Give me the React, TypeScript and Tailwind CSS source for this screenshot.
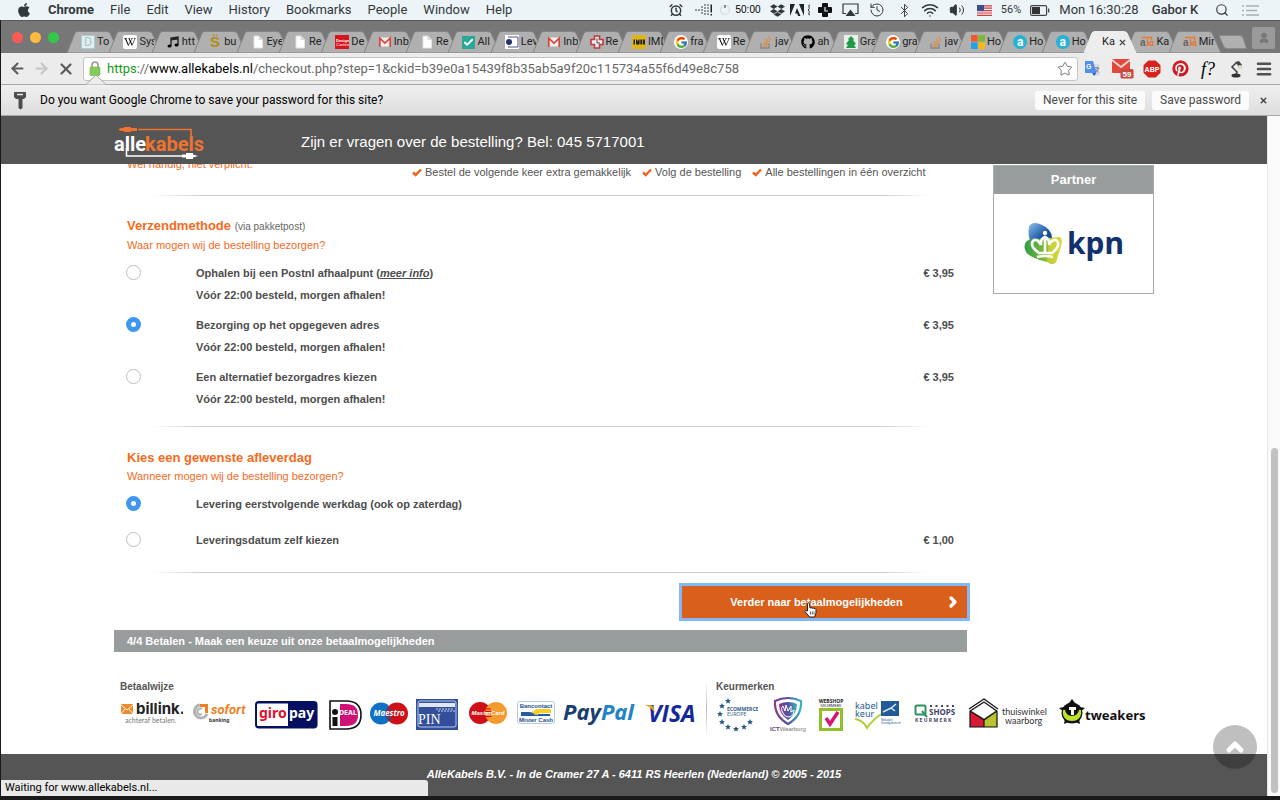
import type { ReactNode } from "react";
import { AlarmClock, Airplay, ArrowLeft, ArrowRight, Bluetooth, Check, ChevronRight, ChevronUp, History, Menu, Search, Star, User, Volume2, Wifi, X } from "lucide-react";
import { FaApple, FaDropbox, FaGithub, FaPinterest, FaStackOverflow, FaWikipediaW } from "react-icons/fa";
import { FcGoogle } from "react-icons/fc";

const menuItems = ["File", "Edit", "View", "History", "Bookmarks", "People", "Window", "Help"];

function Cell({ w, children }: { w: string; children: ReactNode }) {
  return <div className={`flex items-center justify-center whitespace-nowrap ${w}`}>{children}</div>;
}

function MenuBar() {
  return (
    <div className="flex h-5 items-center bg-[#edf4f8] text-[13px] leading-5 text-[#33383b]">
      <div className="flex w-12 justify-center"><FaApple className="size-4" /></div>
      <nav className="flex gap-4 font-['Roboto',sans-serif]">
        <b>Chrome</b>
        {menuItems.map((m) => <span key={m}>{m}</span>)}
      </nav>
      <div className="ml-auto flex h-5 items-center pr-4 font-['Roboto',sans-serif]">
        <Cell w="w-[26px]"><AlarmClock className="size-[14px]" strokeWidth={2.5} /></Cell>
        <Cell w="w-[30px]">
          <svg width="18" height="14" viewBox="0 0 18 14" fill="#222">
            {[[1, 7], [4, 7], [7, 4], [7, 7], [7, 10], [10, 2], [10, 5], [10, 8], [10, 11], [13, 2], [13, 5], [13, 8], [13, 11]].map(([x, y]) => <circle key={`${x}-${y}`} cx={x} cy={y} r="0.8" />)}
            <path d="M15.500 1.500h1.500v8h-1.500zM15.500 11h1.500v1.500h-1.500z" />
          </svg>
        </Cell>
        <Cell w="w-3"><svg width="12" height="12" viewBox="0 0 12 12"><circle cx="6" cy="6" r="4.500" fill="none" stroke="#d4d9dc" strokeWidth="1.200" /><path d="M6 1v3" stroke="#333" /></svg></Cell>
        <Cell w="w-[34px]"><span className="font-['Liberation_Sans',sans-serif] text-[10px] text-black">50:00</span></Cell>
        <Cell w="w-6"><FaDropbox className="size-[15px]" /></Cell>
        <Cell w="w-4">
          <svg width="14" height="12" viewBox="0 0 14 12" fill="#222"><path d="M0 0h5L0 12zM9 0h5v12zM7 4l3.500 8H8L7.200 9.500H5z" /></svg>
        </Cell>
        <Cell w="w-2"><svg width="4" height="12" viewBox="0 0 4 12"><path d="M3 1Q1 1 2 3 3 5 1 6 3 7 2 9 1 11 3 11" fill="none" stroke="#333" /></svg></Cell>
        <Cell w="w-6"><svg width="14" height="14" viewBox="0 0 14 14"><path d="M5 0h4q1 0 1 1v3h3q1 0 1 1v4q0 1-1 1h-3v3q0 1-1 1H5q-1 0-1-1v-3H1q-1 0-1-1V5q0-1 1-1h3V1q0-1 1-1z" fill="#111" /><path d="M7 4v4h3" fill="none" stroke="#edf4f8" strokeWidth="1.200" /></svg></Cell>
        <Cell w="w-[26px]"><svg width="17" height="14" viewBox="0 0 17 14"><path d="M4 10.500H1V1h15v9.500h-3" fill="none" stroke="#33383b" strokeWidth="1.200" /><path d="M8.500 6.500l5 6.500h-10z" fill="#33383b" /></svg></Cell>
        <Cell w="w-7"><History className="size-4" strokeWidth={1.5} /></Cell>
        <Cell w="w-[26px]"><Bluetooth className="size-[15px]" strokeWidth={1.5} /></Cell>
        <Cell w="w-[26px]"><Wifi className="size-[18px]" /></Cell>
        <Cell w="w-[27px]"><Volume2 className="size-4 [&>path:first-child]:fill-current" strokeWidth={1.5} /></Cell>
        <Cell w="w-7">
          <svg width="15" height="11" viewBox="0 0 15 11"><rect width="15" height="11" fill="#f6e9e9" /><path d="M0 .8h15M0 3.200h15M0 5.600h15M0 8h15M0 10.300h15" stroke="#c8434b" strokeWidth="1.200" /><rect width="7" height="6" fill="#3a4d8f" /></svg>
        </Cell>
        <Cell w="w-[26px]"><span className="text-[11px]">56%</span></Cell>
        <Cell w="w-8">
          <svg width="20" height="11" viewBox="0 0 20 11"><rect x=".6" y=".6" width="16" height="9.800" rx="1.500" fill="none" stroke="#444" strokeWidth="1.200" /><rect x="2" y="2" width="8" height="7" fill="#333" /><path d="M18 3.500h1.300v4H18z" fill="#444" /></svg>
        </Cell>
        <Cell w="w-[86px]">Mon 16:30:28</Cell>
        <Cell w="w-[66px]"><span className="font-medium">Gabor K</span></Cell>
        <Cell w="w-7"><Search className="size-[14px]" /></Cell>
        <Cell w="w-7">
          <svg width="17" height="11" viewBox="0 0 17 11"><path d="M0 1h2M4 1h13M0 5.500h2M4 5.500h11M0 10h2M4 10h13" stroke="#a9afb3" strokeWidth="1.400" /></svg>
        </Cell>
      </div>
    </div>
  );
}

const wiki = <span className="flex size-[14px] shrink-0 items-center justify-center rounded-[2px] bg-white text-black"><FaWikipediaW className="size-[12px]" /></span>;
const doc = <svg width="14" height="14" viewBox="0 0 14 14"><path d="M3 1h5l3.500 3.500V13H3z" fill="#fff" stroke="#e2e2e2" /><path d="M8 1v3.500h3.500" fill="#ddd" stroke="#ccc" strokeWidth=".6" /></svg>;
const gmail = <svg width="14" height="14" viewBox="0 0 14 14"><rect x="1" y="2.500" width="12" height="9" fill="#f3efee" /><path d="M1.800 12V3.200L7 8l5.200-4.800V12" fill="none" stroke="#d8453a" strokeWidth="1.700" /></svg>;
const google = <span className="flex size-[14px] shrink-0 items-center justify-center rounded-full bg-white"><FcGoogle className="size-[13px]" /></span>;
const overflow = <svg width="14" height="14" viewBox="0 0 14 14"><path d="M2 8.500V13h8V8.500" fill="none" stroke="#8a8580" strokeWidth="1.300" /><path d="M4 11.200h4.500M4.200 9l4.500.6M5 6.500l4.200 1.700M6.800 4l3.500 2.900M9.500 1.500l2.200 4" fill="none" stroke="#dd8f45" strokeWidth="1.300" /></svg>;
const circleA = <span className="flex size-[14px] shrink-0 items-center justify-center rounded-full bg-[#27b2d6] text-[12px] leading-none font-bold text-white">a</span>;
const kabels = <svg width="14" height="14" viewBox="0 0 14 14"><text x="0" y="11" fontFamily="Liberation Sans" fontWeight="bold" fontSize="10" fill="#666">a</text><path d="M7.500 4v7M12 6l-3.500 2.500L12 11M2 2.500h9.500V5M12.500 11V6" fill="none" stroke="#e97834" strokeWidth="1.500" /></svg>;

const tabs: { label: string; icon: ReactNode; active?: boolean }[] = [
  { label: "To", icon: <span className="flex size-[14px] shrink-0 items-center justify-center border border-[#a9cfd5] bg-[#e4eeef] text-[12px] leading-none text-[#9cc9d0]">D</span> },
  { label: "Sys", icon: wiki },
  { label: "htt", icon: <svg width="14" height="14" viewBox="0 0 14 14"><path d="M5 11V3l7-1v8" fill="none" stroke="#222" strokeWidth="1.400" /><path d="M5 4.500l7-1" stroke="#222" strokeWidth="2" /><ellipse cx="3.500" cy="11" rx="2" ry="1.600" /><ellipse cx="10.500" cy="10" rx="2" ry="1.600" /></svg> },
  { label: "bu", icon: <span className="w-[14px] shrink-0 text-center text-[15px] leading-none font-bold text-[#b58a17]">S̈</span> },
  { label: "Eye", icon: doc },
  { label: "Re", icon: doc },
  { label: "De", icon: <svg width="14" height="14" viewBox="0 0 14 14"><rect width="14" height="14" fill="#d8141c" /><text x="1" y="7" fontSize="4" fontWeight="bold" fontFamily="Liberation Sans" fill="#fff">Design</text><text x="1" y="11" fontSize="4" fontFamily="Liberation Sans" fill="#fff">Contest</text></svg> },
  { label: "Inb", icon: gmail },
  { label: "Re", icon: doc },
  { label: "All", icon: <span className="flex size-[13px] shrink-0 items-center justify-center bg-[#2aa795]"><Check className="size-[11px] text-white" strokeWidth={4} /></span> },
  { label: "Lev", icon: <svg width="14" height="14" viewBox="0 0 14 14"><rect width="14" height="14" fill="#fff" /><path d="M3 2h10v10H3" fill="none" stroke="#4b5389" /><circle cx="4" cy="7" r="3" fill="#28306e" /></svg> },
  { label: "Inb", icon: gmail },
  { label: "Re", icon: <svg width="14" height="14" viewBox="0 0 14 14"><path d="M4.500 1h5v3.500H13v5H9.500V13h-5V9.500H1v-5h3.500z" fill="#eee" stroke="#c03a3f" strokeWidth="1.600" /><path d="M7 3.500V8h3" fill="none" stroke="#444" /></svg> },
  { label: "IMD", icon: <svg width="14" height="14" viewBox="0 0 14 14"><rect width="14" height="14" rx="1" fill="#dfb51c" /><path d="M1.500 4.500h1.500v5h-1.500zM4 9.500v-5h1l.8 2 .8-2h1v5zM8.300 4.500h2v5h-2zM11 4.500h2v5h-2z" fill="#222" /></svg> },
  { label: "fra", icon: google },
  { label: "Re", icon: wiki },
  { label: "jav", icon: overflow },
  { label: "ah", icon: <FaGithub className="size-[14px] text-black" /> },
  { label: "Gra", icon: <svg width="14" height="14" viewBox="0 0 14 14"><rect width="14" height="14" fill="#e8f0e8" /><path d="M7 1l3 3-1 1 3 4-2 1 2 3H2l2-3-2-1 3-4-1-1z" fill="#1f9a45" /></svg> },
  { label: "gra", icon: google },
  { label: "jav", icon: overflow },
  { label: "Ho", icon: <svg width="14" height="14" viewBox="0 0 14 14"><path d="M0 0h6.600v6.600H0z" fill="#f1592a" /><path d="M7.400 0H14v6.600H7.400z" fill="#80b832" /><path d="M0 7.400h6.600V14H0z" fill="#22a2e2" /><path d="M7.400 7.400H14V14H7.400z" fill="#fbb916" /></svg> },
  { label: "Ho", icon: circleA },
  { label: "Ho", icon: circleA },
  { label: "Ka", icon: null, active: true },
  { label: "Ka", icon: kabels },
  { label: "Min", icon: kabels },
];

function TabStrip() {
  return (
    <div className="flex h-[33px] items-end border-t border-[#55595b] bg-[#777]">
      <div className="flex w-[74px] shrink-0 gap-[7px] self-center pl-[11px]">
        <button aria-label="Close window" className="size-[11px] rounded-full bg-[#fc5b57]" />
        <button aria-label="Minimize window" className="size-[11px] rounded-full bg-[#fdbc40]" />
        <button aria-label="Zoom window" className="size-[11px] rounded-full bg-[#34c84a]" />
      </div>
      <div className="flex h-[22px] min-w-0 flex-1">
        {tabs.map((t, i) => (
          <button key={i} className={`relative flex h-[22px] min-w-0 flex-1 items-center pl-[6px] text-left ${t.active ? "z-10" : ""}`}>
            <svg className="absolute top-0 -left-2 h-[22px] w-[53px]" viewBox="0 0 53 22" preserveAspectRatio="none">
              <path d="M0 22L8 2Q9 .5 11 .5H39Q42 .5 43 2L52 22z" fill={t.active ? "#ededed" : "#b0b0b0"} stroke={t.active ? "#ededed" : "#858585"} strokeWidth="1" />
            </svg>
            <span className="relative flex h-[22px] w-full items-center gap-[2px] [&>svg]:shrink-0">
              {t.icon}
              <span className={`overflow-hidden whitespace-nowrap text-[11px] text-[#222] ${t.active ? "ml-1 w-[14px]" : "w-[15px]"}`}>{t.label}</span>
              {t.active && <X className="size-[9px] shrink-0 text-[#444]" strokeWidth={3} />}
            </span>
          </button>
        ))}
      </div>
      <div className="flex w-[61px] shrink-0 items-end justify-between pr-[5px]">
        <button aria-label="New tab" className="mb-1">
          <svg width="28" height="14" viewBox="0 0 28 14"><path d="M1.500.5H21Q23 .5 24 3L27.500 13.500H8Q5.500 13.500 4.500 11L.5 1.500Q.5.5 1.500.5z" fill="#b0b0b0" stroke="#8b8b8b" /></svg>
        </button>
        <button aria-label="Profile" className="mb-1 flex h-[22px] w-[23px] items-center justify-center rounded-[2px] bg-[#9a9a9a]"><User className="size-3 fill-current text-[#777]" strokeWidth={3} /></button>
      </div>
    </div>
  );
}

function Toolbar() {
  return (
    <div className="relative flex h-8 items-center border-b border-[#a8a8a8] bg-[#ececec]">
      <div className="flex w-[82px] shrink-0 items-center justify-between pr-2 pl-2">
        <button aria-label="Back"><ArrowLeft className="size-[17px] text-[#5c5c5c]" strokeWidth={3} /></button>
        <button aria-label="Forward"><ArrowRight className="size-[17px] text-[#c6c6c6]" strokeWidth={3} /></button>
        <button aria-label="Stop"><X className="size-[18px] text-[#5c5c5c]" strokeWidth={3} /></button>
      </div>
      <div className="flex h-6 flex-1 items-center rounded-[3px] border border-[#c4c4c4] bg-white px-1">
        <svg className="mx-px shrink-0" width="12" height="15" viewBox="0 0 12 15"><path d="M3 7V4a3 3 0 0 1 6 0v3" fill="none" stroke="#999" strokeWidth="1.600" /><rect x="1" y="6" width="10" height="8.500" rx="1" fill="#86cc5c" stroke="#69b33e" strokeWidth=".6" /></svg>
        <div className="ml-[5px] flex-1 text-[13px] whitespace-nowrap text-[#686868]"><span className="text-[#159a15]">https</span>://<span className="text-black">www.allekabels.nl</span>/checkout.php?step=1&amp;ckid=b39e0a15439f8b35ab5a9f20c115734a55f6d49e8c758</div>
        <button aria-label="Bookmark this page"><Star className="size-4 text-[#777]" strokeWidth={1.5} /></button>
      </div>
      <div className="flex shrink-0 pr-[2px]">
        <button aria-label="Translate" className="flex w-7 items-center justify-center">
          <svg width="17" height="17" viewBox="0 0 17 17"><path d="M7 4h8.500v12H10z" fill="#d9dde2" /><path d="M1 1h8l3.500 12H1z" fill="#4f8df0" /><path d="M8 13h4.500L10 16z" fill="#2f67c5" /><text x="2" y="9" fontSize="7" fontWeight="bold" fontFamily="Liberation Sans" fill="#fff">G</text><path d="M11 8h4M13 7v1M14.500 8q-1 3-3 4M11.800 9.500l3 3" stroke="#667" fill="none" strokeWidth=".8" /></svg>
        </button>
        <button aria-label="Mail" className="flex w-8 items-center justify-center">
          <svg width="23" height="21" viewBox="0 0 23 21"><rect x="1" y="1" width="18" height="14" rx="1" fill="#e0483c" /><path d="M1 2l9 7 9-7" fill="none" stroke="#f8d7d2" strokeWidth="1.800" /><rect x="9.500" y="11" width="13" height="9.500" rx="1.500" fill="#c74a3d" /><text x="11.500" y="18.500" fontSize="8" fontWeight="bold" fontFamily="Liberation Sans" fill="#fff">59</text></svg>
        </button>
        <button aria-label="Adblock" className="flex w-7 items-center justify-center">
          <svg width="18" height="18" viewBox="0 0 18 18"><path d="M5.300.5h7.400l4.800 4.800v7.400l-4.800 4.800H5.300L.5 12.700V5.300z" fill="#d6231c" /><text x="9" y="11.500" textAnchor="middle" fontSize="7" fontWeight="bold" fontFamily="Liberation Sans" fill="#fff">ABP</text></svg>
        </button>
        <button aria-label="Pinterest" className="flex w-7 items-center justify-center"><FaPinterest className="size-[17px] rounded-full bg-white text-[#cb2027]" /></button>
        <button className="flex w-7 items-center justify-center font-['Liberation_Serif',serif] text-[18px] leading-none text-black italic">f?</button>
        <button aria-label="Lamp" className="flex w-7 items-center justify-center">
          <svg width="14" height="18" viewBox="0 0 14 18"><path d="M7 3L3 7l5 5-1 3" fill="none" stroke="#444" strokeWidth="1.600" /><path d="M6 2l4-1 3 4-2 3z" fill="#444" /><circle cx="11" cy="7" r="2" fill="#d8d8c8" /><ellipse cx="7" cy="15.500" rx="4.500" ry="2" fill="#333" /></svg>
        </button>
        <button aria-label="Menu" className="flex w-7 items-center justify-center"><Menu className="size-[18px] text-[#505050]" strokeWidth={3.5} /></button>
      </div>
      <svg className="absolute -bottom-px left-[85px]" width="20" height="10" viewBox="0 0 20 10"><path d="M0 9.500L10 0l10 9.500" fill="#ececec" stroke="#a8a8a8" /></svg>
    </div>
  );
}

function PasswordBar() {
  return (
    <div className="flex h-[31px] items-center border-b border-[#a9a9a9] bg-gradient-to-b from-[#efefef] to-[#dedede] pr-3 pl-3 text-[12px]">
      <svg width="14" height="19" viewBox="0 0 14 19"><path d="M2 1h10q1 0 1 1v4l-2 2H9.500v9L7.500 18.500 5.500 17V8H3L1 6V2q0-1 1-1z" fill="#4c4c4c" /><path d="M4 3.500h6" stroke="#e9e9e9" strokeWidth="1.500" /></svg>
      <span className="ml-[13px] flex-1 text-black">Do you want Google Chrome to save your password for this site?</span>
      <button className="h-[19px] rounded-[3px] bg-[#fbfbfb] px-2 text-[#4a4a4a]">Never for this site</button>
      <button className="ml-[7px] h-[19px] rounded-[3px] bg-[#fbfbfb] px-2 text-[#4a4a4a]">Save password</button>
      <button aria-label="Dismiss" className="ml-[10px]"><X className="size-[9px] text-[#444]" strokeWidth={4} /></button>
    </div>
  );
}

function Divider() {
  return <div className="mx-[38px] h-px bg-gradient-to-r from-transparent via-[#cdcdcd] via-10% to-transparent" />;
}

function RightFadeDivider() {
  return (
    <div className="mx-[38px] flex">
      <div className="h-px w-12 bg-gradient-to-r from-transparent to-[#cdcdcd]" />
      <div className="h-px flex-1 bg-[#cdcdcd]" />
      <div className="h-px w-12 bg-gradient-to-l from-transparent to-[#cdcdcd]" />
    </div>
  );
}

function SiteHeader() {
  return (
    <header className="h-12 bg-[#555]">
      <div className="mx-auto flex h-12 max-w-[1040px] items-center">
        <a href="#home" aria-label="allekabels" className="w-[187px]">
          <svg width="94" height="40" viewBox="0 0 94 40">
            <path d="M24 9.500H77V17" fill="none" stroke="#ee7330" strokeWidth="1.600" />
            <path d="M4 9.500l3-1.500h3V7h7v1h6v3h-6v1h-7v-1H7z" fill="#ee7330" />
            <g fontFamily="Roboto, sans-serif" fontWeight="bold" fontSize="20"><text x="0" y="31" fill="#fff">alle</text><text x="31" y="31" fill="#ee7330">kabels</text></g>
            <path d="M12.500 28V36H70" fill="none" stroke="#fff" strokeWidth="1.600" />
            <path d="M68 34.500h4V33h7v1.500l5 1.500-5 1.500V39h-7v-1.500h-4z" fill="#fff" />
          </svg>
        </a>
        <p className="pt-1 text-[15px] text-white">Zijn er vragen over de bestelling? Bel: 045 5717001</p>
      </div>
    </header>
  );
}

const benefits = ["Bestel de volgende keer extra gemakkelijk", "Volg de bestelling", "Alle bestellingen in één overzicht"];

function Tick() {
  return <svg width="10" height="9" viewBox="0 0 10 9"><path d="M1 4.500L3.700 7 9 1.500" fill="none" stroke="#f0621d" strokeWidth="2.400" /></svg>;
}

function Option({ id, group, title, note, price, checked }: { id: string; group: string; title: ReactNode; note?: string; price?: string; checked?: boolean }) {
  return (
    <div className="flex pr-[13px] pl-3 text-[11px] leading-[22px] font-bold text-[#4d4d4d]">
      <div className="w-[70px] pt-[3px]">
        <input id={id} type="radio" name={group} defaultChecked={checked} className="block size-[15px] appearance-none rounded-full border border-[#bdbdbd] bg-white checked:border-[5px] checked:border-[#3f97f0]" />
      </div>
      <label htmlFor={id} className="flex-1">{title}{note && <span className="block">{note}</span>}</label>
      <span>{price}</span>
    </div>
  );
}

function SectionTitle({ title, aside, sub }: { title: string; aside?: string; sub: string }) {
  return (
    <div className="pl-[13px] text-[11px] text-[#f56a1d]">
      <h2 className="text-[13px] leading-5 font-bold">{title} {aside && <span className="text-[10px] font-normal text-[#666]">{aside}</span>}</h2>
      <p className="leading-4">{sub}</p>
    </div>
  );
}

function Checkout() {
  return (
    <main className="min-w-0 flex-1">
      <div className="flex h-4 text-[11px] leading-4">
        <div className="flex h-2 w-[298px] items-end overflow-hidden pl-[13px] text-[#f56a1d]"><span className="leading-4">Wel handig, niet verplicht.</span></div>
        <ul className="flex gap-[11px] text-[#555]">
          {benefits.map((b) => <li key={b} className="flex items-center gap-[3px] whitespace-nowrap"><Tick />{b}</li>)}
        </ul>
      </div>
      <div className="pt-[15px] pb-5"><RightFadeDivider /></div>
      <SectionTitle title="Verzendmethode" aside="(via pakketpost)" sub="Waar mogen wij de bestelling bezorgen?" />
      <div className="mt-[9px] flex flex-col gap-2">
        <Option id="pickup" group="shipping" title={<>Ophalen bij een Postnl afhaalpunt (<a href="#info" className="italic underline">meer info</a>)</>} note="Vóór 22:00 besteld, morgen afhalen!" price="€ 3,95" />
        <Option id="address" group="shipping" title="Bezorging op het opgegeven adres" note="Vóór 22:00 besteld, morgen afhalen!" price="€ 3,95" checked />
        <Option id="other" group="shipping" title="Een alternatief bezorgadres kiezen" note="Vóór 22:00 besteld, morgen afhalen!" price="€ 3,95" />
      </div>
      <div className="pt-4 pb-[21px]"><RightFadeDivider /></div>
      <SectionTitle title="Kies een gewenste afleverdag" sub="Wanneer mogen wij de bestelling bezorgen?" />
      <div className="mt-[9px] flex flex-col gap-[14px]">
        <Option id="next" group="day" title="Levering eerstvolgende werkdag (ook op zaterdag)" checked />
        <Option id="custom" group="day" title="Leveringsdatum zelf kiezen" price="€ 1,00" />
      </div>
      <div className="pt-[21px] pb-[13px]"><RightFadeDivider /></div>
      <div className="flex justify-end">
        <div className="relative w-[285px]">
          <button className="flex h-8 w-full items-center bg-[#d8601c] px-[6px] text-[11px] font-bold text-white outline-3 outline-[#84b8f4]">
            <span className="flex-1 text-center">Verder naar betaalmogelijkheden</span>
            <ChevronRight className="size-4" strokeWidth={5} />
          </button>
          <svg className="absolute top-[15px] left-[122px]" width="14" height="17" viewBox="0 0 14 17"><path d="M3.500 9V2.500Q4 1 5.300 2.500L6 7q1.200-1 2 .2 1.300-.8 2 .4 1.500-.5 2 1V12l-1.500 4H5.500L1 10.500Q1 8.500 3.500 10z" fill="#fff" stroke="#222" /><path d="M6.500 10.500v3M8.300 10.500v3M10 10.500v3" stroke="#222" strokeWidth=".7" /></svg>
        </div>
      </div>
      <h2 className="mt-[12px] h-[22px] bg-[#989c9c] pl-[13px] text-[11px] leading-[22px] font-bold text-white">4/4 Betalen - Maak een keuze uit onze betaalmogelijkheden</h2>
    </main>
  );
}

function Partner() {
  return (
    <aside className="mt-px w-[161px] shrink-0 self-start border border-[#a9acac]">
      <h2 className="h-7 bg-[#989c9c] text-center text-[13px] leading-7 font-bold text-white">Partner</h2>
      <a href="#kpn" aria-label="kpn" className="flex h-[99px] items-center justify-center">
        <svg width="104" height="48" viewBox="0 0 104 48">
          <defs>
            <linearGradient id="kb" x1="0" y1="0" x2="1" y2="1"><stop offset="0" stopColor="#8cc4ec" /><stop offset=".6" stopColor="#1c56a4" /><stop offset="1" stopColor="#163a7b" /></linearGradient>
            <linearGradient id="kg" x1="0" y1="0" x2="1" y2="0"><stop offset="0" stopColor="#2f9d49" /><stop offset="1" stopColor="#c5d62f" /></linearGradient>
          </defs>
          <path d="M7 7Q9 1 18 4 30 9 30 18L26 24H10Q5 16 7 7z" fill="url(#kb)" />
          <path d="M4 22Q8 18 14 19L38 17Q41 19 39 26L34 42Q31 46 25 42 8 38 4 32 1 26 4 22z" fill="url(#kg)" />
          <path d="M27 19l11-2q3 3 1 9l-5 16q-3 3-9 0z" fill="#e7db3e" opacity=".55" />
          <path d="M17 33Q6 25 12 20q4-1 7 5-1-6 4-8 5 2 4 8 3-6 7-5 6 5-4 13z" fill="none" stroke="#fff" strokeWidth="2.600" />
          <path d="M23 18v14M15 37q8-2 16 0" fill="none" stroke="#fff" strokeWidth="2.600" /><circle cx="23" cy="13" r="2.200" fill="#fff" />
          <text x="45" y="34" fontFamily="Noto Sans, sans-serif" fontWeight="bold" fontSize="30" fill="#12306d">kpn</text>
        </svg>
      </a>
    </aside>
  );
}

function Logo({ name, w, children }: { name: string; w: number; children: ReactNode }) {
  return <svg role="img" aria-label={name} className="shrink-0" width={w} height="36" viewBox={`0 0 ${w} 36`} fontFamily="Noto Sans, sans-serif">{children}</svg>;
}

const star = "M0-3L.9-1 3-.9 1.400.5 2 2.600 0 1.400-2 2.600-1.400.5-3-.9-.9-1z";
const starSpots = [[12, 5], [6, 10], [4, 18], [6, 26], [12, 31], [20, 33], [28, 31], [34, 26]];

function PaymentLogos() {
  return (
    <div className="flex gap-2">
      <Logo name="billink" w={63}>
        <rect x="1" y="8" width="12" height="10" rx="1" fill="#f08b2c" /><path d="M1 9l6 5 6-5M1 18l4-5M13 18l-4-5" fill="none" stroke="#fff" strokeWidth=".9" />
        <text x="16" y="18" fontFamily="Inter, sans-serif" fontSize="15" fontWeight="bold" fill="#222">billink.</text>
        <text x="5" y="27" fontFamily="Lato, sans-serif" fontSize="7" fill="#777">achteraf betalen.</text>
      </Logo>
      <Logo name="Sofort banking" w={56}>
        <path d="M9 9A6.500 6.500 0 1 0 16 18" fill="none" stroke="#b3b3b3" strokeWidth="3" /><path d="M11 13a3 3 0 1 0 0 5" fill="none" stroke="#b3b3b3" strokeWidth="2" /><path d="M9 9.500h6.500V17" fill="none" stroke="#ef7f23" strokeWidth="3" />
        <text x="20" y="18" fontSize="13" fontStyle="italic" fontWeight="bold" fontFamily="Roboto, sans-serif" fill="#ef7f23">sofort</text><text x="18" y="26" fontSize="5" fontWeight="bold" fill="#333">banking</text>
      </Logo>
      <Logo name="giropay" w={63}>
        <rect x=".8" y="5.800" width="61" height="26" rx="3" fill="#04105f" stroke="#04105f" strokeWidth="1.500" /><path d="M3 7.500h30v22.500H3q-1 0-1-1v-20.500q0-1 1-1z" fill="#fff" />
        <text x="4" y="22" fontSize="14" fontWeight="bold" fill="#e2102c">giro</text><text x="34" y="22" fontSize="14" fontWeight="bold" fill="#fff">pay</text>
      </Logo>
      <Logo name="iDEAL" w={36}>
        <path d="M4 5h16q15 0 15 14t-15 14H4z" fill="#fff" stroke="#111" strokeWidth="1.600" /><path d="M14 8h6q12 0 12 11t-12 11h-6z" fill="#cf1176" /><circle cx="9" cy="16" r="3" fill="#111" /><path d="M6.500 21h5v9h-5z" fill="#111" />
        <text x="13" y="19" fontSize="7" fontWeight="bold" fill="#fff">DEAL</text>
      </Logo>
      <Logo name="Maestro" w={38}>
        <circle cx="11" cy="17.500" r="11" fill="#1070c5" /><circle cx="27" cy="17.500" r="11" fill="#cf1016" /><path d="M16 13h6M15.500 15.500h7M15.500 18h7M15.500 20.500h7M16 23h6" stroke="#244f9d" strokeWidth="1" />
        <text x="19" y="20" textAnchor="middle" fontSize="8" fontStyle="italic" fontWeight="bold" fill="#fff">Maestro</text>
      </Logo>
      <Logo name="PIN" w={42}>
        <path d="M0 3h42v31H0z" fill="#334f9c" /><path d="M2 7q0-2 2-2h34q2 0 2 2v22q0 2-2 2H4q-2 0-2-2z" fill="none" stroke="#b8c8ec" /><path d="M3 7h36v4H3z" fill="#dfe7f7" /><path d="M20 13h18M22 15h17" stroke="#cbd6ef" strokeDasharray="2 1" />
        <text x="2" y="28" fontSize="14" fontFamily="Liberation Serif" fill="#fff">PIN</text>
      </Logo>
      <Logo name="MasterCard" w={41}>
        <circle cx="14" cy="17" r="11" fill="#cf1016" /><circle cx="30" cy="17" r="11" fill="#f59a2f" /><path d="M19 13h6M18.500 15.500h7M18.500 18h7M18.500 20.500h7" stroke="#cf1016" />
        <text x="22" y="19" textAnchor="middle" fontSize="6" fontStyle="italic" fontWeight="bold" fontFamily="Liberation Sans" fill="#fff">MasterCard</text>
      </Logo>
      <Logo name="Bancontact Mister Cash" w={40}>
        <rect x="2.500" y="5.500" width="37" height="22" rx="2" fill="#fff" stroke="#b8ccdf" />
        <text x="21" y="11.500" textAnchor="middle" fontSize="6" fontWeight="bold" fontFamily="Liberation Sans" fill="#1b4f91">Bancontact</text><text x="21" y="26" textAnchor="middle" fontSize="6" fontWeight="bold" fontFamily="Liberation Sans" fill="#1b4f91">Mister Cash</text>
        <path d="M15 16q4 0 6-3h15v4h-9q-4 0-6 3z" fill="#f6cf26" /><path d="M6 16h8q3 0 5 2t5 0h11v2H6z" fill="#215ba5" />
      </Logo>
      <Logo name="PayPal" w={74}>
        <text x="0" y="24" fontSize="22" fontStyle="italic" fontWeight="bold"><tspan fill="#173f70">Pay</tspan><tspan fill="#2283c6">Pal</tspan></text>
      </Logo>
      <Logo name="VISA" w={51}>
        <text x="3" y="26" fontSize="23" fontStyle="italic" fontWeight="bold" fontFamily="Open Sans, sans-serif" fill="#15289b">VISA</text><path d="M0 9h5q3 0 4 4l1 4Q6 11 0 9z" fill="#ef9d1d" />
      </Logo>
    </div>
  );
}

function TrustLogos() {
  return (
    <div className="flex gap-2">
      <Logo name="Ecommerce Europe" w={44}>
        {starSpots.map(([x, y]) => <path key={`${x}-${y}`} d={star} transform={`translate(${x} ${y})`} fill="#24598c" />)}
        <text x="11" y="15" fontSize="5" fontWeight="bold" fill="#356089">ECOMMERCE</text><text x="11" y="20" fontSize="5" fill="#356089">EUROPE</text>
      </Logo>
      <Logo name="ICT Waarborg" w={40}>
        <defs><linearGradient id="ict" x1="0" x2="1"><stop offset="0" stopColor="#8b3a91" /><stop offset=".5" stopColor="#56509f" /><stop offset="1" stopColor="#38b5c4" /></linearGradient></defs>
        <path d="M20 2q7 0 13 3 1 15-13 23Q6 20 7 5q6-3 13-3z" fill="#fff" stroke="url(#ict)" strokeWidth="2.200" /><path d="M20 6q5 0 9 2 0 10-9 16-9-6-9-16 4-2 9-2z" fill="url(#ict)" /><path d="M15 17q-3-5 0-7l2 5 1-6 2 6 3-5v6l3-2q0 7-6 7-3 0-5-4z" fill="none" stroke="#fff" />
        <text x="2" y="35" fontSize="6" fontFamily="Liberation Sans" fill="#777"><tspan fill="#673b84" fontWeight="bold">ICT</tspan>Waarborg</text>
      </Logo>
      <Logo name="Webshop Keurmerk" w={29}>
        <text x="15" y="6.500" textAnchor="middle" fontSize="5" fontWeight="bold" fill="#222">WEBSHOP</text><text x="15" y="11" textAnchor="middle" fontSize="4" fill="#222">KEURMERK</text>
        <rect x="4.500" y="13.500" width="21" height="20" fill="#fff" stroke="#93be2c" strokeWidth="3" /><path d="M10 22l4 6 8-12" fill="none" stroke="#d41672" strokeWidth="3.500" />
      </Logo>
      <Logo name="Kabelkeur" w={49}>
        <text x="2" y="13" fontSize="9" fill="#205b97">kabel</text><text x="2" y="21" fontSize="9" fill="#205b97">keur</text><path d="M2 23q8 1 12 9Q20 23 30 17" fill="none" stroke="#b3cd37" strokeWidth="2" /><rect x="28" y="5" width="18" height="15" fill="#205b97" /><path d="M30 16l8-4 5-4M38 12l4 3" stroke="#d5e6f5" strokeWidth="1.500" /><text x="28" y="25" fontSize="3" fill="#205b97">Nkkabel</text><text x="28" y="28" fontSize="3" fill="#205b97">Goedgekeurd</text>
      </Logo>
      <Logo name="QShops Keurmerk" w={48}>
        <rect x="5.500" y="9.500" width="10" height="9" rx="1.500" fill="none" stroke="#2e925d" strokeWidth="2" /><path d="M12 15l5 6" stroke="#2e925d" strokeWidth="2" /><text x="19" y="19" fontSize="8" fontWeight="bold" fill="#444566">SHOPS</text><text x="5" y="26" fontSize="5" fontWeight="bold" fill="#444566">K E U R M E R K</text><path d="M20 10h25" stroke="#444566" strokeWidth="1.800" strokeDasharray="2 3.500" />
      </Logo>
      <Logo name="Thuiswinkel Waarborg" w={83}>
        <path d="M4 15l14 7v9H4z" fill="#d91a35" /><path d="M31 15l-13 7v9h13z" fill="#bac22f" /><path d="M18 6l13 9v16H4V15zM4 15l14 9 13-9M18 24v7M3 13L18 3l14 10" fill="none" stroke="#111" strokeWidth="1.200" /><path d="M18 6.500l12 8.500-12 8L5 15z" fill="#fff" stroke="#111" strokeWidth=".6" />
        <g fontFamily="Lato, sans-serif" fontSize="9" fill="#333"><text x="36" y="19">thuiswinkel</text><text x="39" y="28">waarborg</text></g>
      </Logo>
      <Logo name="Tweakers" w={92}>
        <path d="M15 3l3 4h-6zM2 12l5-1v5zM28 12l-5-1v5zM7 28l1-5 4 3zM23 28l-1-5-4 3z" fill="#111" /><circle cx="15" cy="17" r="10.500" fill="#111" /><path d="M7 14q-1 10 8 10t8-10q-1 7-8 7t-8-7z" fill="#bde32b" stroke="#bde32b" strokeWidth="2" /><path d="M12 11h7v3h-2v5h-3v-5h-2z" fill="#fff" />
        <text x="28" y="24" fontSize="13" fontWeight="bold" fill="#111">tweakers</text>
      </Logo>
    </div>
  );
}

export default function App() {
  return (
    <div className="flex min-h-screen flex-col bg-[#181a1c] font-['Roboto',sans-serif]">
      <MenuBar />
      <div className="flex flex-1 flex-col pb-1 pl-px">
        <TabStrip />
        <Toolbar />
        <PasswordBar />
        <div className="relative flex flex-1 bg-white font-['Liberation_Sans',Arial,sans-serif]">
          <div className="flex min-w-0 flex-1 flex-col">
            <SiteHeader />
            <div className="mx-auto flex w-full max-w-[1040px] gap-[26px]">
              <Checkout />
              <Partner />
            </div>
            <div className="mx-auto mt-[25px] flex w-full max-w-[1040px] pl-[6px] text-[10px] text-[#555]">
              <section className="pt-[3px]"><h3 className="pb-[2px] leading-[14px] font-bold">Betaalwijze</h3><PaymentLogos /></section>
              <div className="mt-1 mr-[9px] ml-[10px] h-14 w-px shrink-0 bg-gradient-to-b from-transparent via-[#bbb] to-transparent" />
              <section className="pt-[3px]"><h3 className="pb-[2px] leading-[14px] font-bold">Keurmerken</h3><TrustLogos /></section>
            </div>
            <footer className="mt-auto h-[42px] bg-[#555] text-center text-[11px] leading-[40px] font-bold text-white italic">AlleKabels B.V. - In de Cramer 27 A - 6411 RS Heerlen (Nederland) © 2005 - 2015</footer>
          </div>
          <div className="flex w-[13px] flex-col items-center justify-end border-l border-[#e6e6e6] bg-[#fafafa] pb-[3px]">
            <div className="h-[51%] w-[7px] rounded-full bg-[#c1c1c1]" />
          </div>
          <button aria-label="Back to top" className="absolute right-[23px] bottom-[27px] flex size-11 items-center justify-center rounded-full bg-black/25"><ChevronUp className="size-6 text-white" strokeWidth={5} /></button>
          <div role="status" className="absolute bottom-0 left-0 h-4 w-[427px] rounded-tr-[3px] bg-[#e9e9e9] pl-1 font-['Roboto',sans-serif] text-[11px] leading-4 text-black">Waiting for www.allekabels.nl...</div>
        </div>
      </div>
    </div>
  );
}
